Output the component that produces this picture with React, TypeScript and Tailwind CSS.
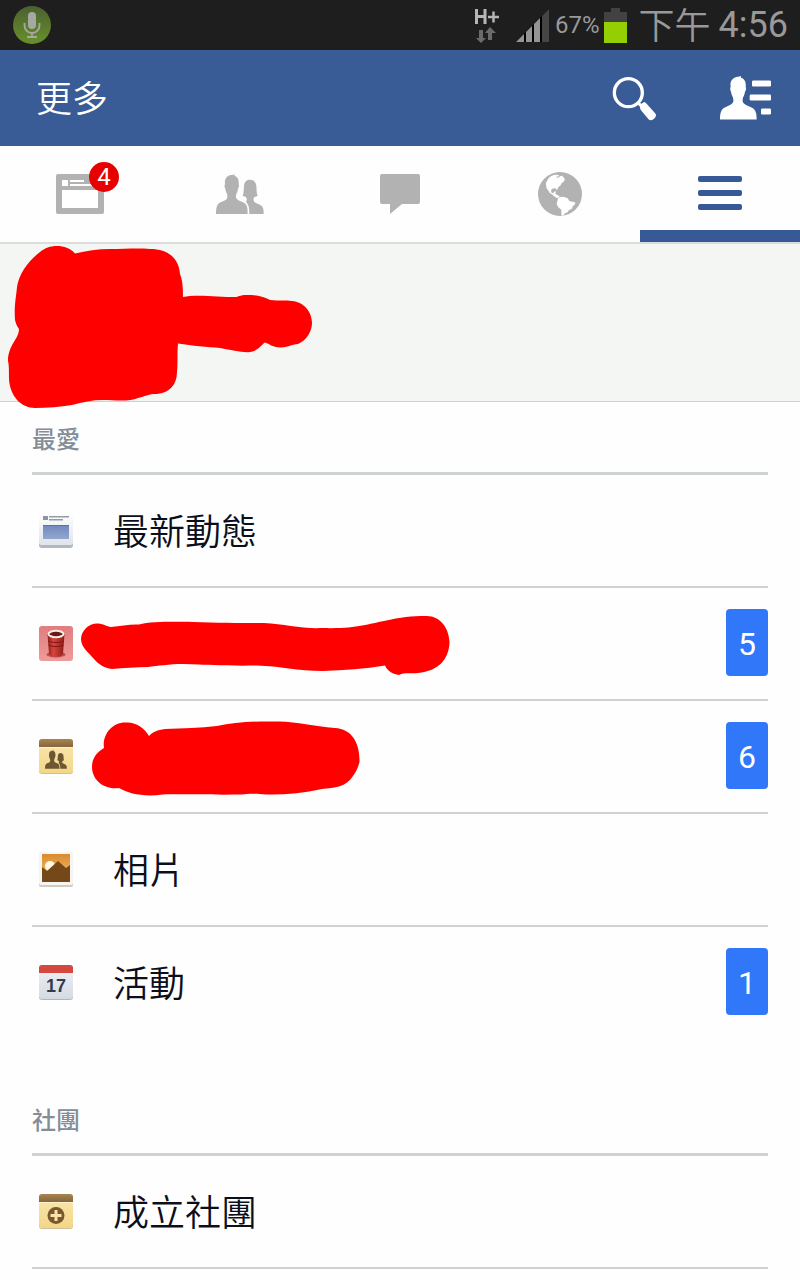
import type { ReactNode } from "react";

function MicIcon() {
  return (
    <svg viewBox="0 0 38 40" className="h-10 w-[38px]" aria-hidden="true">
      <defs>
        <linearGradient id="mic" x1="0" y1="0" x2="0" y2="1">
          <stop offset="0" stopColor="#4b6030" />
          <stop offset="1" stopColor="#67912a" />
        </linearGradient>
      </defs>
      <circle cx="19" cy="20" r="19" fill="url(#mic)" />
      <rect x="15" y="7" width="8" height="17" rx="4" fill="#a6a9a2" />
      <path d="M11.500 18v2.500a7.500 7.500 0 0 0 15 0V18M19 28v4M14 32h10" fill="none" stroke="#a6a9a2" strokeWidth="1.800" />
    </svg>
  );
}

function DataIcon() {
  return (
    <svg viewBox="0 0 26 36" className="h-9 w-[26px]" aria-hidden="true">
      <path d="M2.500 2v15M11 2v15M2 9.500h9" stroke="#b5b5b5" strokeWidth="3" fill="none" />
      <path d="M14 10h11M19.500 4.500v11" stroke="#b5b5b5" strokeWidth="2.500" fill="none" />
      <path d="M5 23h4v8h3l-5 5-5-5h3zM14 33h4v-7h4l-6-6-5 6h3z" fill="#6b6b6b" />
    </svg>
  );
}

function SignalIcon() {
  return (
    <svg viewBox="0 0 33 33" className="h-[33px] w-[33px]" aria-hidden="true">
      <path d="M0 33 33 0v33z" fill="#000" />
      <path d="M0 33l8-8v8zM10 33V23l6-6v16zM18 33V15l6-6v24z" fill="#949494" />
      <path d="M26 33V7l7-7v33z" fill="#454545" />
    </svg>
  );
}

function BatteryIcon() {
  return (
    <svg viewBox="0 0 23 35" className="h-[35px] w-[23px]" aria-hidden="true">
      <path d="M7 0h9v4h7v11H0V4h7z" fill="#424242" />
      <path d="M0 14h23v21H0z" fill="#94cf04" />
    </svg>
  );
}

function SearchIcon() {
  return (
    <svg viewBox="486 225 135 135" className="size-[45px]" aria-hidden="true">
      <circle cx="535" cy="275" r="42" fill="none" stroke="#fff" strokeWidth="10" />
      <path d="M563 304l14 14" stroke="#fff" strokeWidth="9" />
      <path d="M570 315c0-3 8-11 12-11 3 0 5 1 8 4l24 27c3 3 4 5 4 8 0 6-9 15-15 15-3 0-5-1-8-4l-22-26c-2-3-3-7-3-13z" fill="#fff" />
    </svg>
  );
}

function ContactsIcon() {
  return (
    <svg viewBox="810 227 153 131" className="h-11 w-[51px]" aria-hidden="true" fill="#fff">
      <path d="M810 357c0-20 3-31 16-37 11-5 19-8 23-14 2-5 1-10 0-15-3-5-5-10-6-17-3-6-3-11-1-15-3-16 5-27 20-30 5 0 8-1 11-3 0 2 0 4-1 5 12 4 17 14 15 28 2 4 2 9-2 15-1 7-3 12-6 17-1 5-2 10 0 15 4 6 12 9 24 14 14 6 17 17 17 37z" />
      <rect x="906" y="240" width="57" height="18" rx="4" />
      <rect x="899" y="282" width="64" height="18" rx="4" />
      <rect x="933" y="324" width="30" height="18" rx="4" />
    </svg>
  );
}

function FeedIcon() {
  return (
    <svg viewBox="0 0 48 40" className="h-10 w-12" aria-hidden="true">
      <rect width="48" height="40" rx="2" fill="#b2b2b2" />
      <path d="M6 6h6v6H6zM14 6h14v2H14zM14 10h22v2H14zM6 16h36v18H6z" fill="#fff" />
    </svg>
  );
}

function FriendShapes() {
  return (
    <>
      <path d="M558 192c0-20 3-30 14-35 10-4 17-7 19-12 2-5 1-9 0-14-3-4-4-9-5-15-3-5-3-10-1-14-2-15 5-25 18-27 5 0 8-1 11-3 0 2 0 4-1 5 11 3 14 13 13 26 2 4 1 8-2 13-1 6-2 11-5 15-1 5-2 9 0 14 3 5 10 8 20 12 12 5 14 15 14 35z" />
      <path d="M658 192c0-16-1-25-6-31l-5-8c4-1 4-3 3-6l-2-6c-3-1-6-2-10-4 4-8 3-20 4-30 2-13 8-18 18-18s17 5 19 18c1 10 0 22 4 30-3 2-6 3-10 4-3 6-4 11 0 14 4 4 11 6 18 10 8 5 10 11 10 27z" />
    </>
  );
}

function FriendsIcon() {
  return (
    <svg viewBox="558 72 144 120" className="h-10 w-12" fill="#b2b2b2" aria-hidden="true">
      <FriendShapes />
    </svg>
  );
}

function ChatIcon() {
  return (
    <svg viewBox="0 0 40 40" className="size-10" aria-hidden="true">
      <path d="M2 0h36a2 2 0 0 1 2 2v26a2 2 0 0 1-2 2H22L10 40V30H2a2 2 0 0 1-2-2V2a2 2 0 0 1 2-2z" fill="#b2b2b2" />
    </svg>
  );
}

function GlobeIcon() {
  return (
    <svg viewBox="564 66 132 132" className="size-11" aria-hidden="true">
      <circle cx="630" cy="132" r="66" fill="#b2b2b2" />
      <path
        d="M588 98 596 84 605 77 615 74 626 75 627 79 618 80 624 84 630 79 637 77 640 82 645 87 641 95 635 99 631 107 625 111 623 118 619 119 616 114 607 116 603 121 605 129 610 130 612 125 618 124 616 131 622 135 628 138 628 142 622 145 612 139 606 133 600 130 595 122 590 115 588 105z"
        fill="#fff"
      />
      <path
        d="M625 144 633 140 643 141 653 145 658 153 667 155 675 157 676 162 669 168 665 177 657 180 653 187 645 190 640 197 634 196 634 179 625 172 620 162 622 153z"
        fill="#fff"
      />
    </svg>
  );
}

function MenuIcon() {
  return (
    <svg viewBox="0 0 44 36" className="h-9 w-11" fill="#385997" aria-hidden="true">
      <rect width="44" height="6" rx="2" />
      <rect y="14" width="44" height="6" rx="2" />
      <rect y="28" width="44" height="6" rx="2" />
    </svg>
  );
}

function RowIcon({ children }: { children: ReactNode }) {
  return (
    <svg viewBox="0 0 34 35" className="h-[35px] w-[34px] shrink-0" aria-hidden="true">
      {children}
    </svg>
  );
}

function NewsRowIcon() {
  return (
    <RowIcon>
      <defs>
        <linearGradient id="news" x1="0" y1="0" x2="0" y2="1">
          <stop offset="0" stopColor="#fefefe" />
          <stop offset="1" stopColor="#dfe4ea" />
        </linearGradient>
        <linearGradient id="newsPane" x1="0" y1="0" x2="0" y2="1">
          <stop offset="0" stopColor="#7189bd" />
          <stop offset="1" stopColor="#93a6cf" />
        </linearGradient>
      </defs>
      <rect y="2" width="34" height="33" rx="3" fill="#b3b8be" />
      <rect width="34" height="32" rx="2" fill="url(#news)" />
      <path d="M4 3h5v4H4z" fill="#8c96a3" />
      <path d="M10 3h20v1.500H10zM10 6h14v1.500H10z" fill="#929ba6" />
      <path d="M4 12h26v14H4z" fill="url(#newsPane)" />
      <path d="M4 12h26v1H4z" fill="#5a72a6" />
    </RowIcon>
  );
}

function CupRowIcon() {
  return (
    <RowIcon>
      <defs>
        <linearGradient id="cupBg" x1="0" y1="0" x2="0" y2="1">
          <stop offset="0" stopColor="#e07d7d" />
          <stop offset="1" stopColor="#ef9b9a" />
        </linearGradient>
        <linearGradient id="cup" x1="0" y1="0" x2="1" y2="0">
          <stop offset="0" stopColor="#8e1f1c" />
          <stop offset="0.350" stopColor="#d9453c" />
          <stop offset="1" stopColor="#8b1b19" />
        </linearGradient>
      </defs>
      <rect width="34" height="35" rx="3" fill="url(#cupBg)" />
      <ellipse cx="17" cy="28.500" rx="9.500" ry="3" fill="#b54e4d" />
      <path d="M8.500 8h17l-1.500 20c-2 3.500-12 3.500-14 0z" fill="url(#cup)" />
      <path d="M9 15c3 2 13 2 16 0M9.500 19c3 2 12 2 15 0" fill="none" stroke="#7d1817" />
      <ellipse cx="17" cy="8" rx="7.500" ry="3.200" fill="#6b1914" stroke="#f5ece6" strokeWidth="2" />
    </RowIcon>
  );
}

function GroupCard({ children }: { children: ReactNode }) {
  return (
    <RowIcon>
      <defs>
        <linearGradient id="card" x1="0" y1="0" x2="0" y2="1">
          <stop offset="0" stopColor="#fae6b3" />
          <stop offset="1" stopColor="#f3d787" />
        </linearGradient>
        <linearGradient id="cardTop" x1="0" y1="0" x2="0" y2="1">
          <stop offset="0" stopColor="#a98451" />
          <stop offset="1" stopColor="#86653a" />
        </linearGradient>
      </defs>
      <rect y="1" width="34" height="34" rx="3" fill="#d0c19c" />
      <rect width="34" height="34" rx="3" fill="url(#card)" />
      <path d="M0 8V3a3 3 0 0 1 3-3h28a3 3 0 0 1 3 3v5z" fill="url(#cardTop)" />
      <path d="M0 8h34v1H0z" fill="#fff4cf" />
      {children}
    </RowIcon>
  );
}

function GroupRowIcon() {
  return (
    <GroupCard>
      <svg x="6" y="11" width="22" height="19" viewBox="558 72 144 120" fill="#6d5632">
        <FriendShapes />
      </svg>
    </GroupCard>
  );
}

function AddGroupRowIcon() {
  return (
    <GroupCard>
      <circle cx="17" cy="21.500" r="8.500" fill="#79582e" />
      <path d="M17 16v11M11.500 21.500h11" stroke="#f8e3a9" strokeWidth="3" />
    </GroupCard>
  );
}

function PhotoRowIcon() {
  return (
    <RowIcon>
      <defs>
        <linearGradient id="sky" x1="0" y1="0" x2="0" y2="1">
          <stop offset="0" stopColor="#d98a2f" />
          <stop offset="1" stopColor="#f9cb7b" />
        </linearGradient>
      </defs>
      <rect y="1" width="34" height="34" rx="2" fill="#cfcbc4" />
      <rect width="34" height="33" rx="2" fill="#f7f5f1" />
      <path d="M3 2h28v28H3z" fill="url(#sky)" />
      <circle cx="11" cy="14" r="5" fill="#fff8e2" />
      <path d="M3 15l5 4 11-10 8 7 4-3v17H3z" fill="#744818" />
    </RowIcon>
  );
}

function CalendarRowIcon() {
  return (
    <RowIcon>
      <defs>
        <linearGradient id="cal" x1="0" y1="0" x2="0" y2="1">
          <stop offset="0" stopColor="#f0f3f7" />
          <stop offset="1" stopColor="#d5dae2" />
        </linearGradient>
      </defs>
      <rect y="1" width="34" height="34" rx="3" fill="#b2b7be" />
      <rect width="34" height="34" rx="3" fill="url(#cal)" />
      <path d="M0 8V3a3 3 0 0 1 3-3h28a3 3 0 0 1 3 3v5z" fill="#d3483f" />
      <text x="17" y="27" textAnchor="middle" fontFamily="Liberation Sans, sans-serif" fontWeight="700" fontSize="18" fill="#323d4c">
        17
      </text>
    </RowIcon>
  );
}

function ProfileScribble() {
  return (
    <svg viewBox="0 0 320 170" className="absolute top-0 left-0 h-[170px] w-80" aria-hidden="true">
      <path
        d="M75 9.500C70 4 64 2 57 2C50 2 45 4 40 8C28 17 19 30 17 43C16 54 14 62 15 76C16 80 17 82 19 85C19 95 8 101 8 117C9 121 9 126 9 135C10 152 21 164 35 164C48 164 60 163 72 161C83 158 92 156 103 156C115 156 129 158 138 154C150 151 148 150 157 150C169 149 177 141 177 128C178 120 177 110 178 99.500C192 102 208 103 220 104C232 106 243 109 250 108C258 107 261 101 265 98.500C270 100 271 103 281 103.500C289 103 293 100 298 100C307 96 312 87 312 79C312 68 304 58 292 57C285 56 280 57 270 56C262 52 256 51 247 51C239 51 239 53 235 53C220 53 195 50 183 53C183 47 183 37 180 30C179 15 169 5 150 5C137 4 125 5 110 5C98 5 86 7 75 9.500Z"
        fill="red"
      />
    </svg>
  );
}

function LongScribble() {
  return (
    <svg viewBox="80 610 372 68" className="absolute top-[22px] left-20 h-[68px] w-[372px]" aria-hidden="true">
      <path
        d="M81 639C81 631 89 623 98 623.500C104 624 108 627 111 627C121 626 130 624 139 624.500C152 621 180 622 193 622C220 623 245 623 264 623C285 624 302 629 322 628C356 629 368 624 384 621C401 617 412 616 425 616C440 615 449 628 449.500 642C449 659 439 671 418 673C410 674 405 672 399 675C393 674 388 672 385 665.500C365 669 344 670 323 671C297 671 280 666 257 665.500C230 666 210 665 183 664C169 664 158 666 148 667C136 667 124 668 112 669C104 668 98 664 94 659C88 652 81 647 81 639Z"
        fill="red"
      />
    </svg>
  );
}

function ShortScribble() {
  return (
    <svg viewBox="90 715 272 86" className="absolute top-[14px] left-[90px] h-[86px] w-[272px]" aria-hidden="true">
      <path
        d="M104 748C102 735 112 722 126 722.500C137 722 145 729 149 736C153 732 157 730 165 729C183 728 200 728 217 726C235 722 255 721 279 721.500C298 722 313 726 335 728C352 729 360 743 359.500 762C359 764 357 771 353 776C346 787 335 788 322 789C303 793 284 795 266 794.500C256 794 250 793 242 794.500C215 795 180 794 163 794.500C144 797 129 794 119 788C104 790 92 780 92 767C92 758 97 752 104 748Z"
        fill="red"
      />
    </svg>
  );
}

type Item = {
  icon: ReactNode;
  label?: string;
  cover?: ReactNode;
  count?: number;
};

const favorites: Item[] = [
  { icon: <NewsRowIcon />, label: "最新動態" },
  { icon: <CupRowIcon />, cover: <LongScribble />, count: 5 },
  { icon: <GroupRowIcon />, cover: <ShortScribble />, count: 6 },
  { icon: <PhotoRowIcon />, label: "相片" },
  { icon: <CalendarRowIcon />, label: "活動", count: 1 },
];

const groups: Item[] = [{ icon: <AddGroupRowIcon />, label: "成立社團" }];

function Section({ title, items, closed = false }: { title: string; items: Item[]; closed?: boolean }) {
  return (
    <section>
      <h2 className="mx-8 border-b-3 border-[#cfd2d3] pt-5 pb-[14px] text-[24px] leading-9 font-medium text-[#848c96]">{title}</h2>
      <ul>
        {items.map((item, i) => (
          <li key={i} className="relative">
            <a
              href="#"
              className={`mx-8 flex h-[113px] items-center border-b-2 pl-[7px] text-[#0b0f1c] ${
                i < items.length - 1 || closed ? "border-[#cfd2d5]" : "border-transparent"
              }`}
            >
              {item.icon}
              <span className="ml-10 flex-1 pt-1 text-[36px] leading-[48px] font-[350]">{item.label}</span>
              {item.count !== undefined && (
                <span className="mb-0.5 flex h-[67px] w-[42px] items-center justify-center rounded bg-[#3077fa] pt-0.5 text-[32px] text-white">
                  {item.count}
                </span>
              )}
            </a>
            {item.cover}
          </li>
        ))}
      </ul>
    </section>
  );
}

const tabs = [
  { name: "動態消息", icon: <FeedIcon />, count: 4 },
  { name: "朋友", icon: <FriendsIcon /> },
  { name: "訊息", icon: <ChatIcon /> },
  { name: "通知", icon: <GlobeIcon /> },
  { name: "更多", icon: <MenuIcon />, active: true },
];

export default function App() {
  return (
    <div className="min-h-screen bg-[#fefefe] font-['Roboto','Noto_Sans_CJK_TC',sans-serif]">
      <div className="flex h-[50px] items-center justify-between bg-[#1e1e1e] pr-3 pl-[13px] text-[#999]">
        <MicIcon />
        <div className="flex items-center">
          <DataIcon />
          <span className="ml-4">
            <SignalIcon />
          </span>
          <span className="ml-1.5 text-[24px]">67%</span>
          <span className="ml-1">
            <BatteryIcon />
          </span>
          <span className="ml-3 pt-1 text-[36px] leading-[46px] font-[350]">下午</span>
          <span className="ml-2 text-[36px] leading-[50px]">4:56</span>
        </div>
      </div>

      <header className="flex h-24 items-center bg-[#395b96] pr-[29px] pl-9 text-white">
        <h1 className="flex-1 pt-1 text-[36px] leading-[48px] font-[350]">更多</h1>
        <button type="button" aria-label="搜尋">
          <SearchIcon />
        </button>
        <button type="button" aria-label="聯絡人" className="ml-[63px]">
          <ContactsIcon />
        </button>
      </header>

      <nav className="grid grid-cols-5 border-b-2 border-[#dadddb]">
        {tabs.map((tab) => (
          <button
            key={tab.name}
            type="button"
            aria-label={tab.name}
            className={`flex h-24 items-center justify-center border-b-12 pt-3 ${tab.active ? "border-[#385997]" : "border-transparent"}`}
          >
            <span className="relative">
              {tab.icon}
              {tab.count && (
                <span className="absolute -top-3 -right-[15px] flex size-[30px] items-center justify-center rounded-full bg-[#e60000] text-[24px] text-white">
                  {tab.count}
                </span>
              )}
            </span>
          </button>
        ))}
      </nav>

      <div className="relative z-10 h-[158px] border-b border-[#cdd1d2] bg-[#f4f6f4]">
        <ProfileScribble />
      </div>

      <main>
        <Section title="最愛" items={favorites} />
        <div className="h-[43px]" />
        <Section title="社團" items={groups} closed />
      </main>
    </div>
  );
}
